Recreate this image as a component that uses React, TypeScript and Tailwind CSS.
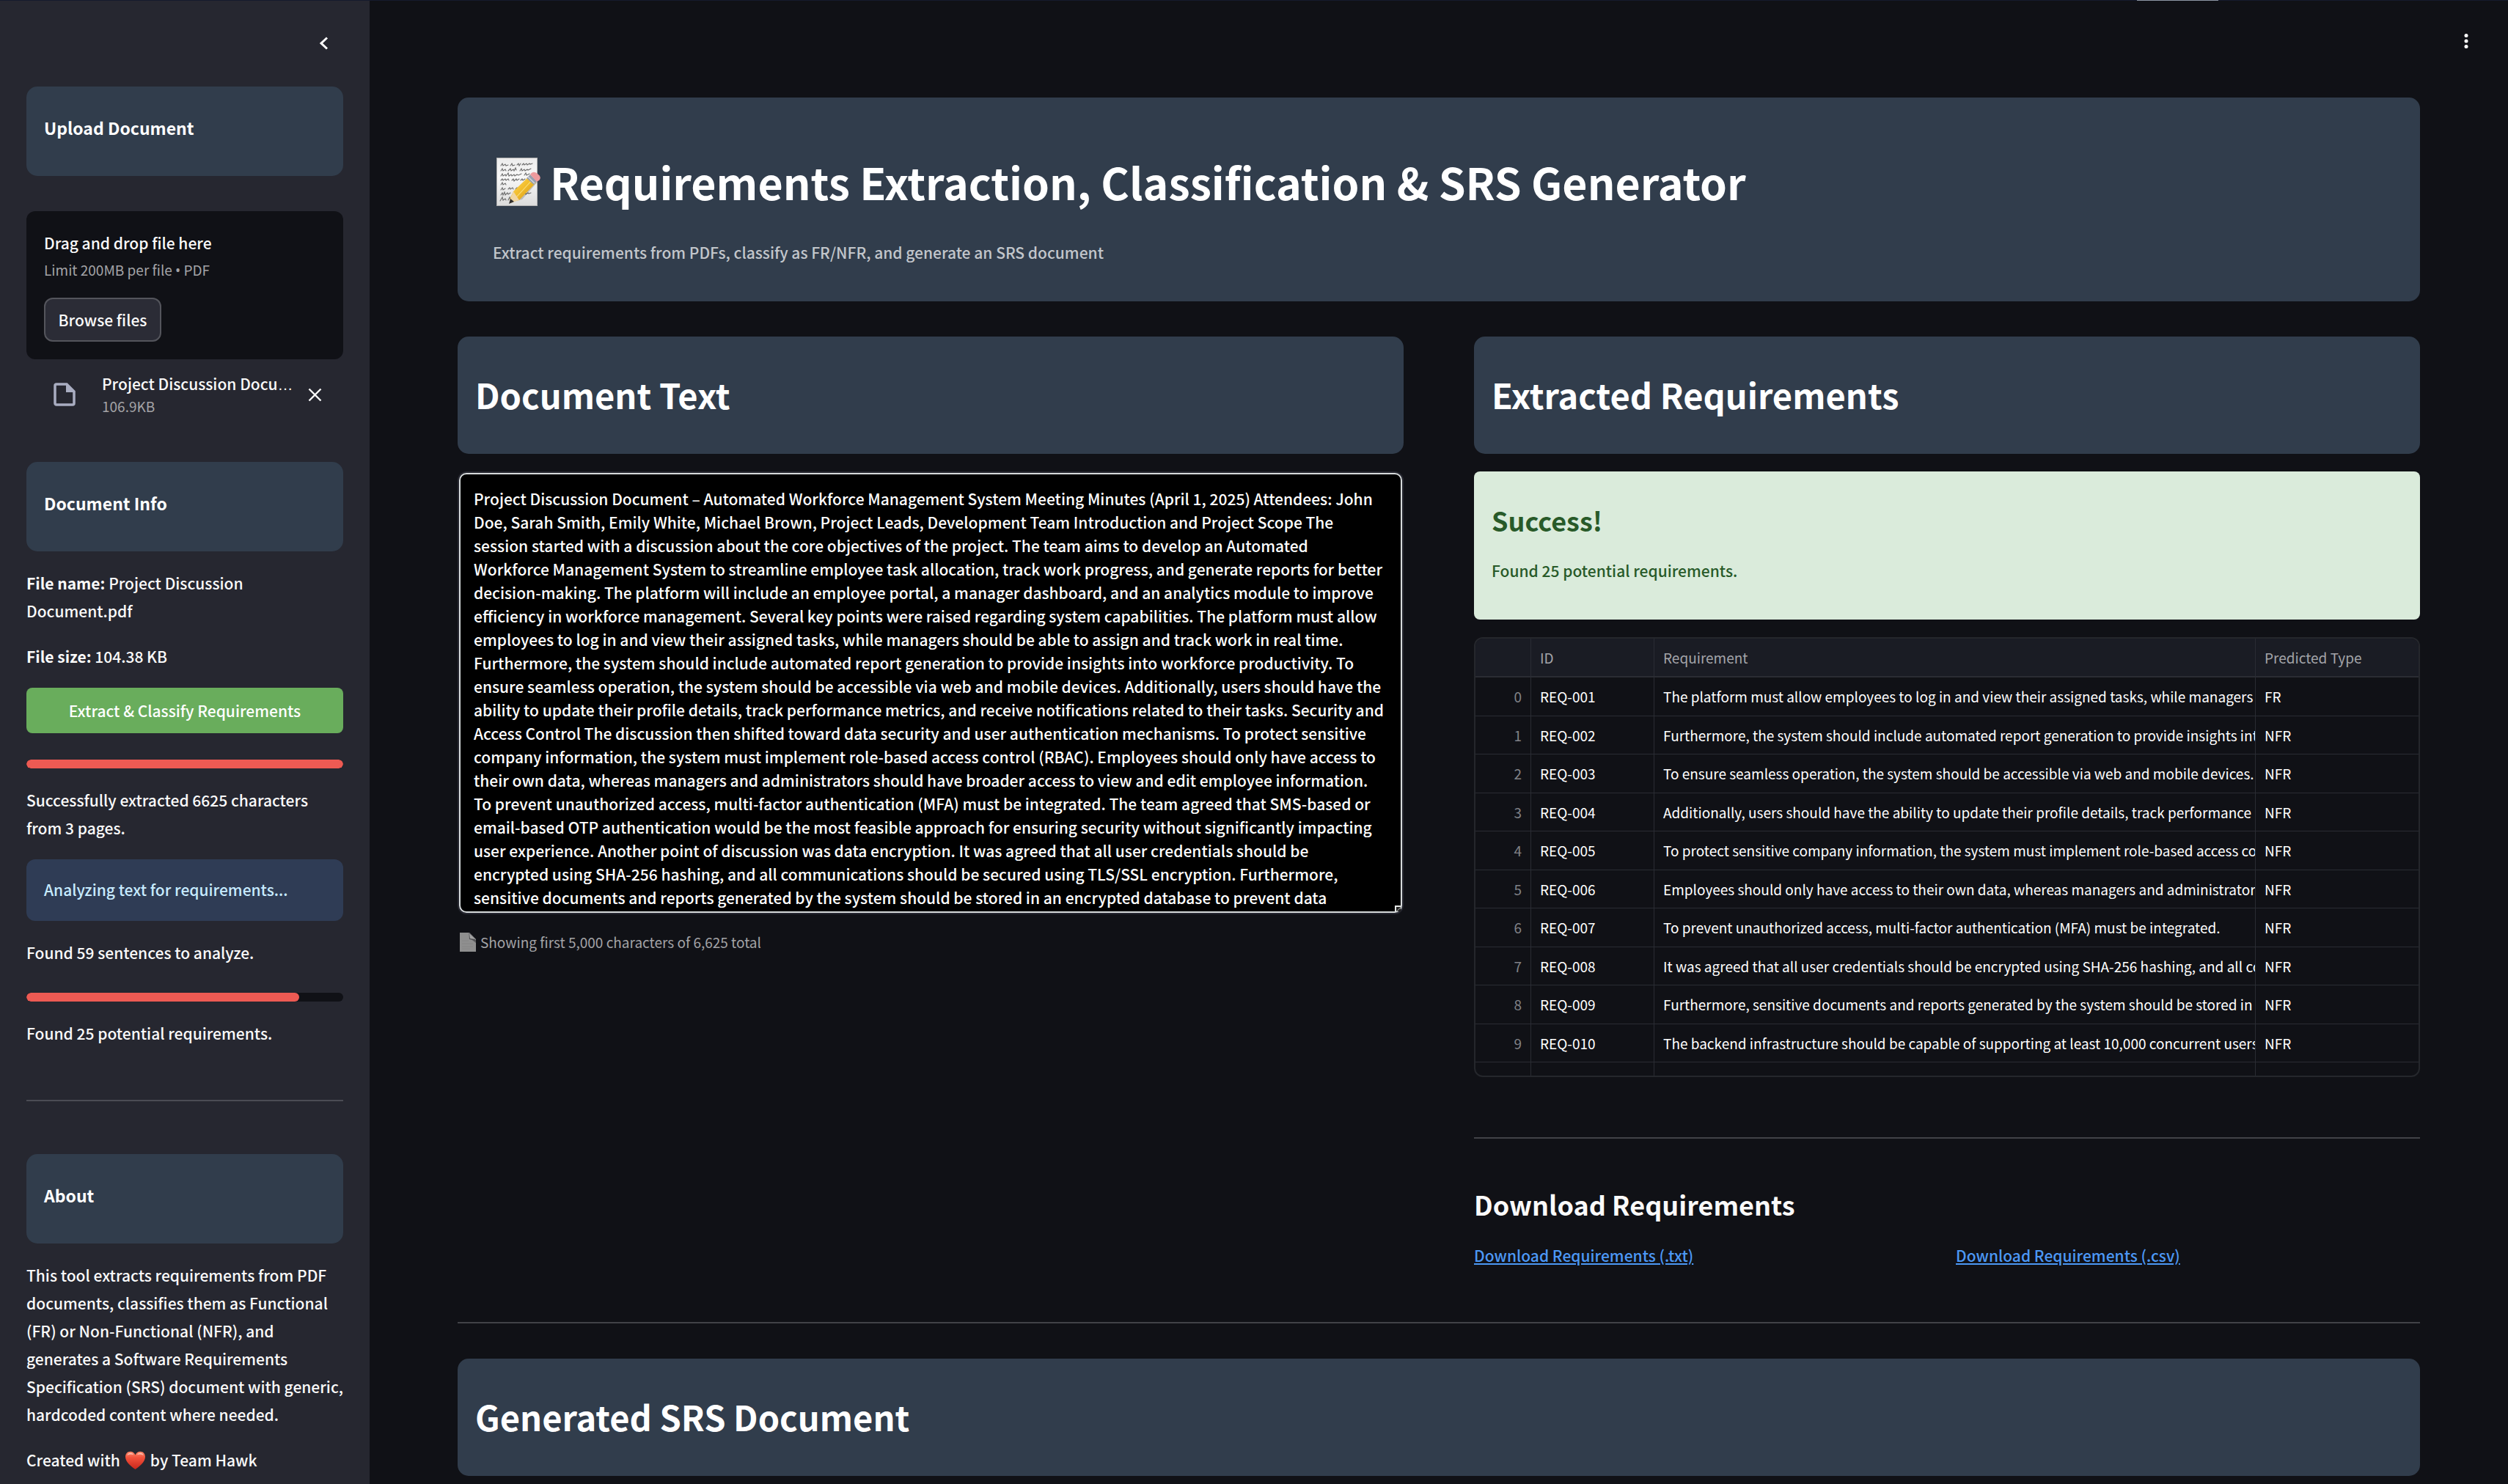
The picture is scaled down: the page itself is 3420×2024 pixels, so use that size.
import type { ReactNode } from "react";

const DOCUMENT_TEXT =
  "Project Discussion Document – Automated Workforce Management System Meeting Minutes (April 1, 2025) Attendees: John Doe, Sarah Smith, Emily White, Michael Brown, Project Leads, Development Team Introduction and Project Scope The session started with a discussion about the core objectives of the project. The team aims to develop an Automated Workforce Management System to streamline employee task allocation, track work progress, and generate reports for better decision-making. The platform will include an employee portal, a manager dashboard, and an analytics module to improve efficiency in workforce management. Several key points were raised regarding system capabilities. The platform must allow employees to log in and view their assigned tasks, while managers should be able to assign and track work in real time. Furthermore, the system should include automated report generation to provide insights into workforce productivity. To ensure seamless operation, the system should be accessible via web and mobile devices. Additionally, users should have the ability to update their profile details, track performance metrics, and receive notifications related to their tasks. Security and Access Control The discussion then shifted toward data security and user authentication mechanisms. To protect sensitive company information, the system must implement role-based access control (RBAC). Employees should only have access to their own data, whereas managers and administrators should have broader access to view and edit employee information. To prevent unauthorized access, multi-factor authentication (MFA) must be integrated. The team agreed that SMS-based or email-based OTP authentication would be the most feasible approach for ensuring security without significantly impacting user experience. Another point of discussion was data encryption. It was agreed that all user credentials should be encrypted using SHA-256 hashing, and all communications should be secured using TLS/SSL encryption. Furthermore, sensitive documents and reports generated by the system should be stored in an encrypted database to prevent data";

const REQUIREMENTS: { id: string; text: string; type: string }[] = [
  { id: "REQ-001", text: "The platform must allow employees to log in and view their assigned tasks, while managers should be able to assign", type: "FR" },
  { id: "REQ-002", text: "Furthermore, the system should include automated report generation to provide insights into workforce productivity.", type: "NFR" },
  { id: "REQ-003", text: "To ensure seamless operation, the system should be accessible via web and mobile devices.", type: "NFR" },
  { id: "REQ-004", text: "Additionally, users should have the ability to update their profile details, track performance metrics, and receive", type: "NFR" },
  { id: "REQ-005", text: "To protect sensitive company information, the system must implement role-based access control (RBAC).", type: "NFR" },
  { id: "REQ-006", text: "Employees should only have access to their own data, whereas managers and administrators should have broader", type: "NFR" },
  { id: "REQ-007", text: "To prevent unauthorized access, multi-factor authentication (MFA) must be integrated.", type: "NFR" },
  { id: "REQ-008", text: "It was agreed that all user credentials should be encrypted using SHA-256 hashing, and all communications should", type: "NFR" },
  { id: "REQ-009", text: "Furthermore, sensitive documents and reports generated by the system should be stored in an encrypted database", type: "NFR" },
  { id: "REQ-010", text: "The backend infrastructure should be capable of supporting at least 10,000 concurrent users without", type: "NFR" },
];

function MemoIcon() {
  return (
    <svg className="h-[72px] w-[66px] shrink-0" viewBox="0 0 66 72" aria-hidden="true">
      <defs>
        <linearGradient id="paper" x1="0" y1="0" x2="0" y2="1">
          <stop offset="0" stopColor="#ececec" />
          <stop offset="0.4" stopColor="#f8f8f8" />
          <stop offset="1" stopColor="#dcdcdc" />
        </linearGradient>
        <linearGradient id="pencil" x1="0" y1="0" x2="1" y2="1">
          <stop offset="0" stopColor="#ffe070" />
          <stop offset="0.5" stopColor="#f2bd2c" />
          <stop offset="1" stopColor="#c98d16" />
        </linearGradient>
      </defs>
      <rect x="5.5" y="3.5" width="55" height="65" fill="url(#paper)" stroke="#b4b4b4" />
      <g fill="none" stroke="#6b6b6b" strokeWidth="1.1" strokeLinecap="round">
        <path d="M11 14l2-3 1 3 3-2 1 2 3-1M24 14l2-3 1 3 3-1M33 13l2-2 1 3 2-3M40 13l2-2 1 2 3-2 1 2 3-2 1 1 3-1" />
        <path d="M11 21l2-3 1 3 3-2 1 2M21 21l3-3 1 3 3-2 1 2 2-4 1 3M37 21l2-3 1 3 3-2 1 2 3-2 1 1 4-2" />
        <path d="M11 28l2-3 1 3 3-2 1 2 3-4 1 4 3-2 1 2 3-2 1 2 3-2 2 1 4-2M43 27l2-3 1 3 4-2" />
        <path d="M11 34l2-2 1 2 3-2 1 2 3-2 1 2M26 34l2-2 1 3 3-3 1 2 3-2M38 34l2-2 1 2 3-2" />
        <path d="M11 40l2-3 1 3 3-2 1 2" />
        <path d="M11 47l2-3 1 3 3-2M21 46l2-2 1 2 3-2 1 2M31 46l2-2 1 2 3-2" />
        <path d="M11 54l2-3 1 3 2-4 1 4 3-3 1 2 3-2M42 53l2-2 1 2 3-2 1 1 3-1" />
        <path d="M10 62l3-5 1 4 3-2 1 2M21 61l2-4 1 3" />
      </g>
      <path d="M25 66l5-4 10-2L63 34l-2-4z" fill="#000" opacity=".18" />
      <path d="M51 27l8 10-23 24-10 2-3-3 5-11z" fill="url(#pencil)" />
      <path d="M55 32L32 57" stroke="#fff0a0" strokeWidth="1.2" opacity=".6" />
      <path d="M28 49l8 12-12 4-1-3z" fill="#f0d6a4" />
      <path d="M24 59l5 4-7 3z" fill="#33302e" />
      <path d="M46 31l5-5 9 9-4 5z" fill="#9aa0ae" />
      <path d="M48 29l9 9" stroke="#d8dce4" strokeWidth="1.2" />
      <path d="M51 26c3-4 6-4 10-1 4 3 5 6 2 9l-3 2z" fill="#ee9a9d" />
    </svg>
  );
}

function HeartIcon() {
  return (
    <svg className="mx-1.5 inline-block h-[26px] w-[29px] align-[-5px]" viewBox="0 0 29 26" role="img" aria-label="love">
      <defs>
        <linearGradient id="heart" x1="0" y1="0" x2="0" y2="1">
          <stop offset="0" stopColor="#ff8a6b" />
          <stop offset="0.35" stopColor="#f2513b" />
          <stop offset="1" stopColor="#c9261b" />
        </linearGradient>
      </defs>
      <path d="M14.5 25C9 21 1 15 1 8c0-4.400 3-7.200 6.600-7.200 3.200 0 5.700 1.900 6.900 4.600 1.200-2.700 3.700-4.600 6.900-4.600C25 .8 28 3.600 28 8c0 7-8 13-13.500 17z" fill="url(#heart)" />
      <path d="M3.500 6c.6-2 2.200-3.200 4.200-3.200 2 0 3.400.8 4.400 2.400-2.800-1-5.800-.8-8.600.8zM17 5.200c1-1.600 2.400-2.400 4.400-2.400 2 0 3.600 1.200 4.200 3.200-2.800-1.600-5.800-1.800-8.600-.8z" fill="#fff" opacity=".55" />
    </svg>
  );
}

function PageIcon() {
  return (
    <svg className="ml-[3px] h-[26px] w-[22px]" viewBox="0 0 22 26" aria-hidden="true">
      <path d="M0 0h13l9 9v17H0z" fill="#8f8f8f" />
      <path d="M3 11h9M3 15h15M3 19h15M3 22h11" stroke="#868686" />
      <path d="M13 7l9 3v4z" fill="#5c5c5e" />
      <path d="M12.500 0L22 11l-9-2z" fill="#4b4b4e" />
      <path d="M13 1l8 8-7-1z" fill="#a3a3a3" />
    </svg>
  );
}

function SidebarCard({ children }: { children: ReactNode }) {
  return (
    <div className="rounded-[15px] bg-[#313d4c] px-6 pt-9 pb-[46px]">
      <h2 className="text-[23px] leading-10 font-bold text-white">{children}</h2>
    </div>
  );
}

function SectionCard({ children }: { children: ReactNode }) {
  return (
    <div className="rounded-[15px] bg-[#313d4c] px-6 pt-12 pb-[50px]">
      <h2 className="text-[47px] leading-[62px] font-bold text-white">{children}</h2>
    </div>
  );
}

function Progress({ value, label }: { value: number; label: string }) {
  return (
    <div className="pt-3">
      <div
        role="progressbar"
        aria-label={label}
        aria-valuenow={value}
        aria-valuemin={0}
        aria-valuemax={100}
        className="h-3 overflow-hidden rounded-full bg-[#101116]"
      >
        <div className="h-full rounded-full bg-[#ed5a53]" style={{ width: `${value}%` }} />
      </div>
    </div>
  );
}

function Sidebar() {
  return (
    <aside className="w-[504px] shrink-0 bg-[#262730] px-9 pb-3">
      <div className="flex h-[117px] items-start justify-end pt-[42px]">
        <button type="button" aria-label="Collapse sidebar" className="mr-[11px] flex size-8 items-center justify-center">
          <svg className="h-[18px] w-3" viewBox="0 0 12 18" fill="none" stroke="#fff" strokeWidth="3" aria-hidden="true">
            <path d="M11 1.500L3 9l8 7.500" />
          </svg>
        </button>
      </div>
      <SidebarCard>Upload Document</SidebarCard>

      <section className="mt-12 rounded-xl bg-[#101116] p-6">
        <p>Drag and drop file here</p>
        <p className="text-[19px] leading-9 font-normal text-[#a3a3a6]">
          Limit 200MB per file <span className="font-['Noto_Sans'] leading-none">•</span> PDF
        </p>
        <button type="button" className="mt-5 h-15 w-40 rounded-xl border-2 border-[#54555c] bg-[#2b2c36]">
          Browse files
        </button>
      </section>

      <div className="mt-[17px] mb-[61px] flex items-center pr-[29px] pl-[37px]">
        <svg className="h-8 w-[30px] shrink-0" viewBox="0 0 30 32" aria-hidden="true">
          <path d="M4 2h14l10 10v16a2 2 0 0 1-2 2H4a2 2 0 0 1-2-2V4a2 2 0 0 1 2-2z" fill="none" stroke="#a9adc1" strokeWidth="3.500" />
          <path d="M17 2l11 11H17z" fill="#a9adc1" />
        </svg>
        <div className="ml-9 min-w-0 flex-1">
          <p className="leading-8 whitespace-nowrap" title="Project Discussion Document.pdf">
            Project Discussion Docu<span className="font-['Liberation_Sans'] leading-none">…</span>
          </p>
          <p className="text-[19px] leading-[30px] font-normal text-[#a3a3a6]">106.9KB</p>
        </div>
        <button type="button" aria-label="Remove file">
          <svg className="size-[19px]" viewBox="0 0 19 19" stroke="#fff" strokeWidth="2.400" aria-hidden="true">
            <path d="M1.500 1.500l16 16M17.500 1.500l-16 16" />
          </svg>
        </button>
      </div>

      <div className="flex flex-col gap-6">
        <SidebarCard>Document Info</SidebarCard>
        <p>
          <strong>File name:</strong> Project Discussion Document.pdf
        </p>
        <p>
          <strong>File size:</strong> 104.38 KB
        </p>
        <button type="button" className="h-[62px] rounded-lg bg-[#69ad5c] text-white">
          Extract &amp; Classify Requirements
        </button>
        <Progress value={100} label="Text extraction" />
        <p>Successfully extracted 6625 characters from 3 pages.</p>
        <p className="rounded-xl bg-[#2f3c55] px-6 pt-[22px] pb-6 text-[#c7ebff]">Analyzing text for requirements...</p>
        <p>Found 59 sentences to analyze.</p>
        <Progress value={86} label="Requirement analysis" />
        <p>Found 25 potential requirements.</p>
        <hr className="my-12 border-t-2 border-[#4b4c54]" />
        <SidebarCard>About</SidebarCard>
        <p>
          This tool extracts requirements from PDF documents, classifies them as Functional (FR) or Non-Functional
          (NFR), and generates a Software Requirements Specification (SRS) document with generic, hardcoded content
          where needed.
        </p>
        <p>
          Created with
          <HeartIcon />
          by Team Hawk
        </p>
      </div>
    </aside>
  );
}

function DocumentText() {
  return (
    <section>
      <SectionCard>Document Text</SectionCard>
      <div className="relative mt-6 rounded-xl border-2 border-[#262730]">
        <textarea
          readOnly
          aria-label="Document text"
          value={DOCUMENT_TEXT}
          className="block h-[600px] w-full resize-none overflow-hidden rounded-[10px] border-2 border-[#d6dadb] bg-black py-[17px] pr-[23px] pl-[18px] leading-8 text-white"
        />
        <svg className="absolute right-0.5 bottom-0.5 size-2" viewBox="0 0 8 8" aria-hidden="true">
          <path d="M0 0h8v8H0z" fill="#e4e6e4" />
          <path d="M2 2h6v6H2z" fill="#222" />
          <path d="M2.500 8L8 2.500" stroke="#cfd2cf" />
        </svg>
      </div>
      <p className="mt-[22px] flex items-center gap-1.5 text-[19px] leading-8 font-normal text-[#a3a3a6]">
        <PageIcon />
        Showing first 5,000 characters of 6,625 total
      </p>
    </section>
  );
}

function RequirementsTable() {
  return (
    <div className="mt-6 h-[600px] overflow-hidden rounded-xl border-2 border-[#25272c]">
      <table className="w-full table-fixed border-separate border-spacing-0 text-[19px] leading-6 font-normal">
        <thead className="bg-[#1a1c24] text-left text-[#a3a4a9]">
          <tr className="h-[53px]">
            <th scope="col" aria-label="Row" className="w-[76px] border-r border-b-2 border-[#2a2c33]" />
            <th scope="col" className="w-[168px] border-r border-b-2 border-[#2a2c33] px-3 font-normal">ID</th>
            <th scope="col" className="border-r border-b-2 border-[#2a2c33] px-3 font-normal">Requirement</th>
            <th scope="col" className="w-[222px] border-b-2 border-[#2a2c33] px-3 font-normal">Predicted Type</th>
          </tr>
        </thead>
        <tbody className="text-white">
          {REQUIREMENTS.map((row, i) => (
            <tr key={row.id} className="odd:h-[53px] even:h-[52px]">
              <td className="border-r border-b border-[#2a2c33] pr-3 text-right text-[#818287]">{i}</td>
              <td className="border-r border-b border-[#2a2c33] px-3">{row.id}</td>
              <td className="overflow-hidden border-r border-b border-[#2a2c33] pl-3 whitespace-nowrap">{row.text}</td>
              <td className="border-b border-[#2a2c33] px-3">{row.type}</td>
            </tr>
          ))}
          <tr className="h-[53px]">
            <td className="border-r border-[#2a2c33]" />
            <td className="border-r border-[#2a2c33]" />
            <td className="border-r border-[#2a2c33]" />
            <td />
          </tr>
        </tbody>
      </table>
    </div>
  );
}

function ExtractedRequirements() {
  return (
    <section>
      <SectionCard>Extracted Requirements</SectionCard>
      <div className="mt-6 rounded-lg bg-[#daebdb] px-6 pt-[42px] pb-12 text-[#285a29]">
        <h3 className="text-[36px] leading-[48px] font-bold">Success!</h3>
        <p className="mt-[26px]">Found 25 potential requirements.</p>
      </div>
      <RequirementsTable />
      <hr className="mt-[82px] border-t-2 border-[#414247]" />
      <h3 className="mt-16 text-[36px] leading-[50px] font-bold">Download Requirements</h3>
      <div className="mt-[26px] grid grid-cols-2 gap-6">
        <div>
          <a href="#txt" className="text-[#4c98f5] underline">Download Requirements (.txt)</a>
        </div>
        <div>
          <a href="#csv" className="text-[#4c98f5] underline">Download Requirements (.csv)</a>
        </div>
      </div>
    </section>
  );
}

export default function App() {
  return (
    <div className="relative flex min-h-screen border-t border-[#151b2d] bg-[#101116] font-['Noto_Sans_CJK_SC','Noto_Sans',sans-serif] text-[21px] leading-[38px] font-medium text-[#fafafa]">
      <div className="absolute -top-px right-[395px] h-px w-[111px] bg-[#8d97a5]" />
      <Sidebar />
      <main className="min-w-0 flex-1 pb-[11px]">
        <div className="flex h-[132px] justify-end pt-[39px] pr-[41px]">
          <button type="button" aria-label="Menu" className="flex size-8 items-center justify-center">
            <svg className="h-5 w-[6px]" viewBox="0 0 6 20" fill="#fff" aria-hidden="true">
              <circle cx="3" cy="2.500" r="2.500" />
              <circle cx="3" cy="10" r="2.500" />
              <circle cx="3" cy="17.500" r="2.500" />
            </svg>
          </button>
        </div>
        <div className="px-30">
          <header className="rounded-[15px] bg-[#313d4c] px-12 pt-[73px] pb-12">
            <h1 className="flex items-center gap-3 text-[59px] leading-[84px] font-bold text-white">
              <MemoIcon />
              Requirements Extraction, Classification &amp; SRS Generator
            </h1>
            <p className="mt-[35px] text-[#c2c6cb]">
              Extract requirements from PDFs, classify as FR/NFR, and generate an SRS document
            </p>
          </header>
          <div className="mt-12 grid grid-cols-2 gap-24">
            <DocumentText />
            <ExtractedRequirements />
          </div>
          <hr className="mt-[72px] mb-12 border-t-2 border-[#414247]" />
          <SectionCard>Generated SRS Document</SectionCard>
        </div>
      </main>
    </div>
  );
}
